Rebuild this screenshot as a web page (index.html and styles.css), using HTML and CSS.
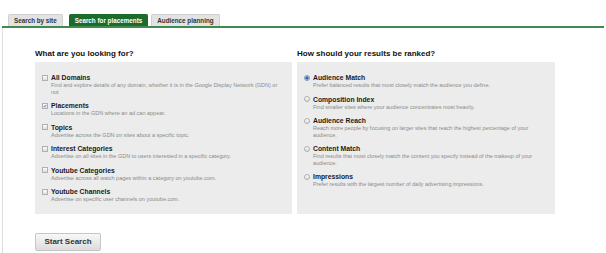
FILE: index.html
```html
<!DOCTYPE html>
<html lang="en">
<head>
    <meta charset="UTF-8">
    <title>Placement Tool</title>
    <link rel="stylesheet" href="styles.css">
</head>
<body>
    <div class="tool">
        <!-- Tabs -->
        <div class="tabs">
            <div class="tab">Search by site</div>
            <div class="tab active">Search for placements</div>
            <div class="tab">Audience planning</div>
        </div>

        <div class="panel">
            <div class="columns">
                <!-- Left column -->
                <div class="col">
                    <h2 class="col-title">What are you looking for?</h2>
                    <div class="box">
                        <div class="option">
                            <span class="check"></span>
                            <div>
                                <div class="opt-title">All Domains</div>
                                <div class="opt-desc">Find and explore details of any domain, whether it is in the Google Display Network (GDN) or not</div>
                            </div>
                        </div>
                        <div class="option">
                            <span class="check checked">
                                <svg viewBox="0 0 8 8" width="6" height="6"><path d="M1.5 4.2 L3.2 6 L6.6 1.6" fill="none" stroke="#2b5fa8" stroke-width="1.4"/></svg>
                            </span>
                            <div>
                                <div class="opt-title">Placements</div>
                                <div class="opt-desc">Locations in the GDN where an ad can appear.</div>
                            </div>
                        </div>
                        <div class="option">
                            <span class="check"></span>
                            <div>
                                <div class="opt-title">Topics</div>
                                <div class="opt-desc">Advertise across the GDN on sites about a specific topic.</div>
                            </div>
                        </div>
                        <div class="option">
                            <span class="check"></span>
                            <div>
                                <div class="opt-title">Interest Categories</div>
                                <div class="opt-desc">Advertise on all sites in the GDN to users interested in a specific category.</div>
                            </div>
                        </div>
                        <div class="option">
                            <span class="check"></span>
                            <div>
                                <div class="opt-title">Youtube Categories</div>
                                <div class="opt-desc">Advertise across all watch pages within a category on youtube.com.</div>
                            </div>
                        </div>
                        <div class="option">
                            <span class="check"></span>
                            <div>
                                <div class="opt-title">Youtube Channels</div>
                                <div class="opt-desc">Advertise on specific user channels on youtube.com.</div>
                            </div>
                        </div>
                    </div>
                </div>

                <!-- Right column -->
                <div class="col">
                    <h2 class="col-title">How should your results be ranked?</h2>
                    <div class="box">
                        <div class="option">
                            <span class="radio selected"></span>
                            <div>
                                <div class="opt-title">Audience Match</div>
                                <div class="opt-desc">Prefer balanced results that most closely match the audience you define.</div>
                            </div>
                        </div>
                        <div class="option">
                            <span class="radio"></span>
                            <div>
                                <div class="opt-title">Composition Index</div>
                                <div class="opt-desc">Find smaller sites where your audience concentrates most heavily.</div>
                            </div>
                        </div>
                        <div class="option">
                            <span class="radio"></span>
                            <div>
                                <div class="opt-title">Audience Reach</div>
                                <div class="opt-desc">Reach more people by focusing on larger sites that reach the highest percentage of your audience.</div>
                            </div>
                        </div>
                        <div class="option">
                            <span class="radio"></span>
                            <div>
                                <div class="opt-title">Content Match</div>
                                <div class="opt-desc">Find results that most closely match the content you specify instead of the makeup of your audience.</div>
                            </div>
                        </div>
                        <div class="option">
                            <span class="radio"></span>
                            <div>
                                <div class="opt-title">Impressions</div>
                                <div class="opt-desc">Prefer results with the largest number of daily advertising impressions.</div>
                            </div>
                        </div>
                    </div>
                </div>
            </div>

            <button class="start-btn">Start Search</button>
        </div>
    </div>
</body>
</html>
```

FILE: styles.css
```css
/* General */
body {
    margin: 0;
    font-family: "Liberation Sans", Arial, sans-serif;
    background: #fff;
    color: #222;
}

.tool {
    padding: 14px 2px 0 2px;
}

/* Tabs */
.tabs {
    display: flex;
    gap: 3px;
    padding-left: 6px;
    border-bottom: 2px solid #3f8a4e;
}
.tab {
    height: 12px;
    line-height: 12px;
    padding: 0 5px;
    font-size: 6.3px;
    font-weight: bold;
    color: #333;
    background: #e3e3e3;
    border: 1px solid #cfcfcf;
    border-bottom: none;
    border-radius: 2px 2px 0 0;
    box-sizing: border-box;
}
.tab.active {
    background: #1d6b2c;
    border-color: #1d6b2c;
    color: #fff;
    margin-left: 3px;
}

/* Main panel */
.panel {
    border-left: 1px solid #dedede;
    padding: 21px 0 10px 32px;
}

.columns {
    display: grid;
    grid-template-columns: 257px 258px;
    gap: 5px;
}

.col {
    display: flex;
    flex-direction: column;
}

.col-title {
    margin: 0 0 3px;
    font-size: 8px;
    line-height: 10px;
    font-weight: bold;
    color: #111;
}

.box {
    flex: 1;
    background: #ececec;
    padding: 11px 8px 5px 7px;
}

/* Options */
.option {
    display: grid;
    grid-template-columns: 6px 1fr;
    column-gap: 3px;
    margin-bottom: 6px;
}
.opt-title {
    font-size: 6.8px;
    line-height: 9px;
    font-weight: bold;
    color: #1a1a1a;
}
.opt-desc {
    font-size: 5.5px;
    line-height: 6.5px;
    color: #8a8a8a;
}

.check,
.radio {
    width: 6px;
    height: 6px;
    margin-top: 1.5px;
    box-sizing: border-box;
    border: 1px solid #b0b0b0;
    background: linear-gradient(#fdfdfd, #dcdcdc);
    display: flex;
    align-items: center;
    justify-content: center;
}
.check svg {
    display: block;
}
.radio {
    border-radius: 50%;
}
.radio.selected {
    border-color: #7c96b8;
    background: radial-gradient(circle, #2f64a8 0 1.4px, #dfe8f3 1.8px);
}

/* Button */
.start-btn {
    display: block;
    margin-top: 19px;
    width: 66px;
    height: 18px;
    font-family: "Liberation Sans", Arial, sans-serif;
    font-size: 8px;
    font-weight: bold;
    color: #333;
    background: linear-gradient(#f8f8f8, #dcdcdc);
    border: 1px solid #c6c6c6;
    border-radius: 2px;
    padding: 0;
}
```
